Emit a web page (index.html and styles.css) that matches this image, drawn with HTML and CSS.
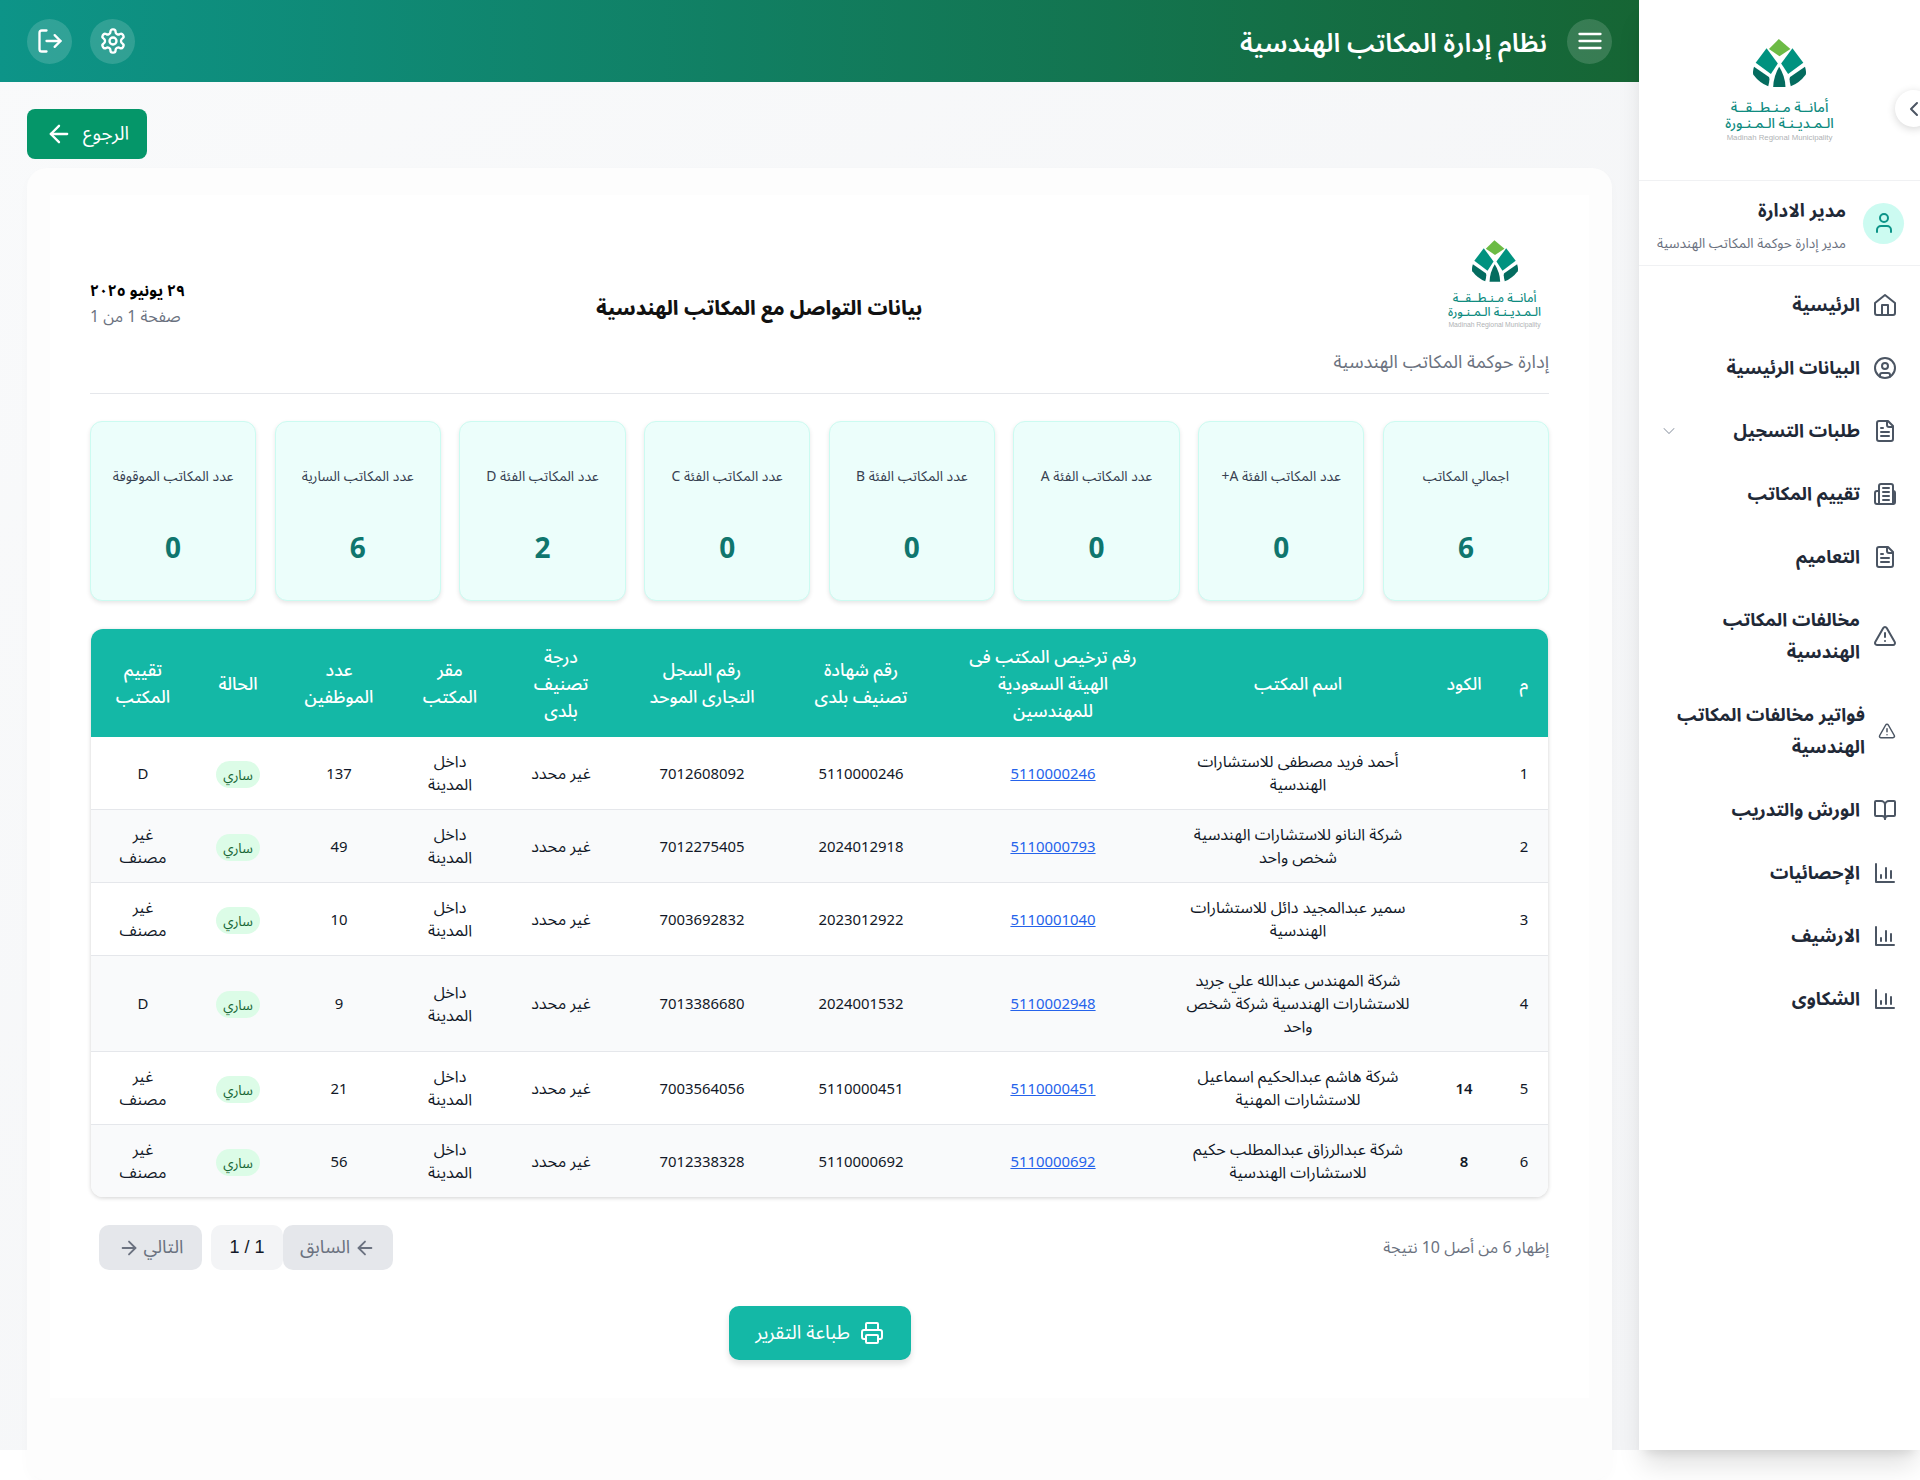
FILE: index.html
```html
<!DOCTYPE html>
<html lang="ar" dir="rtl">
<head>
<meta charset="utf-8">
<title>بيانات التواصل مع المكاتب الهندسية</title>
<link rel="stylesheet" href="styles.css">
</head>
<body>
<svg class="defs" aria-hidden="true">
  <symbol id="mark" viewBox="0 0 160 145">
    <path fill="#6cbb45" d="M78 0 113 30 80 52 48 30Z"/>
    <path fill="#00927f" d="M41 28 8 72 54 106 75 74Z"/>
    <path fill="#00927f" d="M119 28 152 72 106 106 85 74Z"/>
    <path fill="#046c5f" d="M3 84Q-2 100 1 108 20 133 46 143 52 120 48 115Z"/>
    <path fill="#046c5f" d="M157 84Q162 100 159 108 140 133 114 143 108 120 112 115Z"/>
    <path fill="#046c5f" d="M79 84Q62 112 61 145H98Q97 112 79 84Z"/>
  </symbol>
  <symbol id="i-home" viewBox="0 0 24 24"><path d="m2 10 10-8 10 8v10a2 2 0 0 1-2 2H4a2 2 0 0 1-2-2z"/><path d="M9 22V12h6v10"/></symbol>
  <symbol id="i-user-circle" viewBox="0 0 24 24"><circle cx="12" cy="12" r="10"/><circle cx="12" cy="10" r="3"/><path d="M7 20.662V19a2 2 0 0 1 2-2h6a2 2 0 0 1 2 2v1.662"/></symbol>
  <symbol id="i-file" viewBox="0 0 24 24"><path d="M15 2H6a2 2 0 0 0-2 2v16a2 2 0 0 0 2 2h12a2 2 0 0 0 2-2V7Z"/><path d="M14 2v4a2 2 0 0 0 2 2h4"/><path d="M10 9H8"/><path d="M16 13H8"/><path d="M16 17H8"/></symbol>
  <symbol id="i-paper" viewBox="0 0 24 24"><path d="M6 22V4a2 2 0 0 1 2-2h10a2 2 0 0 1 2 2v18"/><path d="M6 9H4a2 2 0 0 0-2 2v9a2 2 0 0 0 2 2h16a2 2 0 0 0 2-2v-9a2 2 0 0 0-2-2h-0"/><path d="M10 6h6"/><path d="M10 10h6"/><path d="M10 14h6"/><path d="M10 18h6"/></symbol>
  <symbol id="i-alert" viewBox="0 0 24 24"><path d="m21.73 18-8-14a2 2 0 0 0-3.48 0l-8 14A2 2 0 0 0 4 21h16a2 2 0 0 0 1.73-3"/><path d="M12 9v4"/><path d="M12 17h.01"/></symbol>
  <symbol id="i-book" viewBox="0 0 24 24"><path d="M12 7v14"/><path d="M3 18a1 1 0 0 1-1-1V4a1 1 0 0 1 1-1h5a4 4 0 0 1 4 4 4 4 0 0 1 4-4h5a1 1 0 0 1 1 1v13a1 1 0 0 1-1 1h-6a3 3 0 0 0-3 3 3 3 0 0 0-3-3z"/></symbol>
  <symbol id="i-chart" viewBox="0 0 24 24"><path d="M3 3v18h18"/><path d="M8 17v-3"/><path d="M13 17V7"/><path d="M18 17v-7"/></symbol>
  <symbol id="i-left" viewBox="0 0 24 24"><path d="M19 12H5"/><path d="m12 19-7-7 7-7"/></symbol>
  <symbol id="i-right" viewBox="0 0 24 24"><path d="M5 12h14"/><path d="m12 5 7 7-7 7"/></symbol>
</svg>

<aside class="sidebar">
  <button class="collapse" type="button" aria-label="طي">
    <svg class="collapse-ico" viewBox="0 0 24 24"><path d="m15 18-6-6 6-6"/></svg>
  </button>
  <div class="side-logo">
    <div class="logo logo-lg">
      <svg class="logo-mark"><use href="#mark"/></svg>
      <div class="logo-ar">أمانــة مـنـطــقــة</div>
      <div class="logo-ar">الـمـديـنـة الـمـنـورة</div>
      <div class="logo-en" dir="ltr">Madinah Regional Municipality</div>
    </div>
  </div>
  <div class="side-user">
    <div class="avatar">
      <svg class="avatar-ico" viewBox="0 0 24 24"><path d="M19 21v-2a4 4 0 0 0-4-4H9a4 4 0 0 0-4 4v2"/><circle cx="12" cy="7" r="4"/></svg>
    </div>
    <div class="user-text">
      <div class="user-name">مدير الادارة</div>
      <div class="user-role">مدير إدارة حوكمة المكاتب الهندسية</div>
    </div>
  </div>
  <nav class="menu">
    <a class="menu-item"><svg class="menu-ico"><use href="#i-home"/></svg><span class="menu-label">الرئيسية</span></a>
    <a class="menu-item"><svg class="menu-ico"><use href="#i-user-circle"/></svg><span class="menu-label">البيانات الرئيسية</span></a>
    <a class="menu-item"><svg class="menu-ico"><use href="#i-file"/></svg><span class="menu-label">طلبات التسجيل</span>
      <svg class="menu-caret" viewBox="0 0 24 24"><path d="m6 9 6 6 6-6"/></svg></a>
    <a class="menu-item"><svg class="menu-ico"><use href="#i-paper"/></svg><span class="menu-label">تقييم المكاتب</span></a>
    <a class="menu-item"><svg class="menu-ico"><use href="#i-file"/></svg><span class="menu-label">التعاميم</span></a>
    <a class="menu-item"><svg class="menu-ico"><use href="#i-alert"/></svg><span class="menu-label menu-label-wrap">مخالفات المكاتب الهندسية</span></a>
    <a class="menu-item"><svg class="menu-ico menu-ico-sm"><use href="#i-alert"/></svg><span class="menu-label">فواتير مخالفات المكاتب الهندسية</span></a>
    <a class="menu-item"><svg class="menu-ico"><use href="#i-book"/></svg><span class="menu-label">الورش والتدريب</span></a>
    <a class="menu-item"><svg class="menu-ico"><use href="#i-chart"/></svg><span class="menu-label">الإحصائيات</span></a>
    <a class="menu-item"><svg class="menu-ico"><use href="#i-chart"/></svg><span class="menu-label">الارشيف</span></a>
    <a class="menu-item"><svg class="menu-ico"><use href="#i-chart"/></svg><span class="menu-label">الشكاوى</span></a>
  </nav>
</aside>

<div class="main">
  <header class="topbar">
    <div class="topbar-start">
      <button class="round-btn" type="button" aria-label="القائمة">
        <svg class="round-ico" viewBox="0 0 24 24"><path d="M3 6h18"/><path d="M3 12h18"/><path d="M3 18h18"/></svg>
      </button>
      <h1 class="app-title">نظام إدارة المكاتب الهندسية</h1>
    </div>
    <div class="topbar-end">
      <button class="round-btn" type="button" aria-label="الإعدادات">
        <svg class="round-ico" viewBox="0 0 24 24"><path d="M12.22 2h-.44a2 2 0 0 0-2 2v.18a2 2 0 0 1-1 1.73l-.43.25a2 2 0 0 1-2 0l-.15-.08a2 2 0 0 0-2.73.73l-.22.38a2 2 0 0 0 .73 2.73l.15.1a2 2 0 0 1 1 1.72v.51a2 2 0 0 1-1 1.74l-.15.09a2 2 0 0 0-.73 2.73l.22.38a2 2 0 0 0 2.73.73l.15-.08a2 2 0 0 1 2 0l.43.25a2 2 0 0 1 1 1.73V20a2 2 0 0 0 2 2h.44a2 2 0 0 0 2-2v-.18a2 2 0 0 1 1-1.73l.43-.25a2 2 0 0 1 2 0l.15.08a2 2 0 0 0 2.73-.73l.22-.39a2 2 0 0 0-.73-2.73l-.15-.08a2 2 0 0 1-1-1.74v-.5a2 2 0 0 1 1-1.74l.15-.09a2 2 0 0 0 .73-2.73l-.22-.38a2 2 0 0 0-2.73-.73l-.15.08a2 2 0 0 1-2 0l-.43-.25a2 2 0 0 1-1-1.73V4a2 2 0 0 0-2-2z"/><circle cx="12" cy="12" r="3"/></svg>
      </button>
      <button class="round-btn" type="button" aria-label="خروج">
        <svg class="round-ico" viewBox="0 0 24 24"><path d="M9 21H5a2 2 0 0 1-2-2V5a2 2 0 0 1 2-2h4"/><path d="m16 17 5-5-5-5"/><path d="M21 12H9"/></svg>
      </button>
    </div>
  </header>

  <div class="content">
    <div class="back-row">
      <a class="back-btn">الرجوع <svg class="back-ico"><use href="#i-left"/></svg></a>
    </div>
    <section class="card">
      <div class="report">
        <div class="report-head">
          <div class="org">
            <div class="logo logo-sm">
              <svg class="logo-mark"><use href="#mark"/></svg>
              <div class="logo-ar">أمانــة مـنـطــقــة</div>
              <div class="logo-ar">الـمـديـنـة الـمـنـورة</div>
              <div class="logo-en" dir="ltr">Madinah Regional Municipality</div>
            </div>
            <div class="org-name">إدارة حوكمة المكاتب الهندسية</div>
          </div>
          <h2 class="report-title">بيانات التواصل مع المكاتب الهندسية</h2>
          <div class="report-meta">
            <div class="report-date">٢٩ يونيو ٢٠٢٥</div>
            <div class="report-page">صفحة 1 من 1</div>
          </div>
        </div>

        <div class="stats">
          <div class="stat"><div class="stat-label">اجمالي المكاتب</div><div class="stat-num">6</div></div>
          <div class="stat"><div class="stat-label">عدد المكاتب الفئة A+</div><div class="stat-num">0</div></div>
          <div class="stat"><div class="stat-label">عدد المكاتب الفئة A</div><div class="stat-num">0</div></div>
          <div class="stat"><div class="stat-label">عدد المكاتب الفئة B</div><div class="stat-num">0</div></div>
          <div class="stat"><div class="stat-label">عدد المكاتب الفئة C</div><div class="stat-num">0</div></div>
          <div class="stat"><div class="stat-label">عدد المكاتب الفئة D</div><div class="stat-num">2</div></div>
          <div class="stat"><div class="stat-label">عدد المكاتب السارية</div><div class="stat-num">6</div></div>
          <div class="stat"><div class="stat-label">عدد المكاتب الموقوفة</div><div class="stat-num">0</div></div>
        </div>

        <div class="table-wrap">
          <table class="table">
            <colgroup>
              <col class="c-m"><col class="c-code"><col class="c-name"><col class="c-lic"><col class="c-cert"><col class="c-rec"><col class="c-deg"><col class="c-hq"><col class="c-emp"><col class="c-st"><col class="c-rate">
            </colgroup>
            <thead>
              <tr>
                <th>م</th><th>الكود</th><th>اسم المكتب</th>
                <th>رقم ترخيص المكتب فى<br>الهيئة السعودية<br>للمهندسين</th>
                <th>رقم شهادة<br>تصنيف بلدى</th>
                <th>رقم السجل<br>التجارى الموحد</th>
                <th>درجة<br>تصنيف<br>بلدى</th>
                <th>مقر<br>المكتب</th>
                <th>عدد<br>الموظفين</th>
                <th>الحالة</th>
                <th>تقييم<br>المكتب</th>
              </tr>
            </thead>
            <tbody>
              <tr>
                <td>1</td><td class="code"></td><td class="ar name">أحمد فريد مصطفى للاستشارات الهندسية</td>
                <td><a class="lic">5110000246</a></td><td>5110000246</td><td>7012608092</td><td class="ar">غير محدد</td><td class="ar">داخل<br>المدينة</td><td>137</td>
                <td><span class="pill">ساري</span></td><td>D</td>
              </tr>
              <tr>
                <td>2</td><td class="code"></td><td class="ar name">شركة النانو للاستشارات الهندسية شخص واحد</td>
                <td><a class="lic">5110000793</a></td><td>2024012918</td><td>7012275405</td><td class="ar">غير محدد</td><td class="ar">داخل<br>المدينة</td><td>49</td>
                <td><span class="pill">ساري</span></td><td class="ar">غير<br>مصنف</td>
              </tr>
              <tr>
                <td>3</td><td class="code"></td><td class="ar name">سمير عبدالمجيد دائل للاستشارات الهندسية</td>
                <td><a class="lic">5110001040</a></td><td>2023012922</td><td>7003692832</td><td class="ar">غير محدد</td><td class="ar">داخل<br>المدينة</td><td>10</td>
                <td><span class="pill">ساري</span></td><td class="ar">غير<br>مصنف</td>
              </tr>
              <tr>
                <td>4</td><td class="code"></td><td class="ar name">شركة المهندس عبدالله علي جريد للاستشارات الهندسية شركة شخص واحد</td>
                <td><a class="lic">5110002948</a></td><td>2024001532</td><td>7013386680</td><td class="ar">غير محدد</td><td class="ar">داخل<br>المدينة</td><td>9</td>
                <td><span class="pill">ساري</span></td><td>D</td>
              </tr>
              <tr>
                <td>5</td><td class="code">14</td><td class="ar name">شركة هاشم عبدالحكيم اسماعيل للاستشارات المهنية</td>
                <td><a class="lic">5110000451</a></td><td>5110000451</td><td>7003564056</td><td class="ar">غير محدد</td><td class="ar">داخل<br>المدينة</td><td>21</td>
                <td><span class="pill">ساري</span></td><td class="ar">غير<br>مصنف</td>
              </tr>
              <tr>
                <td>6</td><td class="code">8</td><td class="ar name">شركة عبدالرزاق عبدالمطلب حكيم للاستشارات الهندسية</td>
                <td><a class="lic">5110000692</a></td><td>5110000692</td><td>7012338328</td><td class="ar">غير محدد</td><td class="ar">داخل<br>المدينة</td><td>56</td>
                <td><span class="pill">ساري</span></td><td class="ar">غير<br>مصنف</td>
              </tr>
            </tbody>
          </table>
        </div>

        <div class="pager-row">
          <div class="pager-info">إظهار 6 من أصل 10 نتيجة</div>
          <div class="pager">
            <span class="page-btn page-prev"><svg class="page-ico"><use href="#i-left"/></svg> السابق</span>
            <span class="page-cur">1 / 1</span>
            <span class="page-btn page-next">التالي <svg class="page-ico"><use href="#i-right"/></svg></span>
          </div>
        </div>

        <div class="print-row">
          <a class="print-btn">
            <svg class="print-ico" viewBox="0 0 24 24"><path d="M6 18H4a2 2 0 0 1-2-2v-5a2 2 0 0 1 2-2h16a2 2 0 0 1 2 2v5a2 2 0 0 1-2 2h-2"/><path d="M6 9V3a1 1 0 0 1 1-1h10a1 1 0 0 1 1 1v6"/><rect x="6" y="14" width="12" height="8" rx="1"/></svg>
            طباعة التقرير
          </a>
        </div>
      </div>
    </section>
  </div>
</div>
</body>
</html>
```
FILE: styles.css
```css
* { box-sizing: border-box; }
html, body { margin: 0; padding: 0; }
body {
  display: flex;
  width: 1920px;
  height: 1480px;
  overflow: hidden;
  background: #fff;
  color: #111827;
  font-family: "Noto Sans Arabic", "Noto Sans", "DejaVu Sans", sans-serif;
  font-size: 15px;
}
.defs { position: absolute; width: 0; height: 0; }
svg use, .menu-ico, .round-ico, .back-ico, .page-ico, .print-ico, .avatar-ico, .collapse-ico, .menu-caret {
  fill: none;
  stroke: currentColor;
  stroke-width: 2;
  stroke-linecap: round;
  stroke-linejoin: round;
}
.logo-mark use { fill: initial; stroke: none; }

/* sidebar */
.sidebar {
  position: relative;
  flex: 0 0 281px;
  height: 1450px;
  background: #fff;
  box-shadow: 0 20px 25px -5px rgba(0,0,0,.12), 0 8px 10px -6px rgba(0,0,0,.1);
  z-index: 2;
}
.collapse {
  position: absolute;
  top: 90px;
  left: 256px;
  width: 37px;
  height: 37px;
  padding: 0;
  border: 0;
  border-radius: 50%;
  background: #fff;
  color: #4b5563;
  box-shadow: 0 2px 8px rgba(0,0,0,.16);
  display: flex;
  align-items: center;
  justify-content: center;
}
.collapse-ico { width: 24px; height: 24px; flex: none; }
.side-logo {
  height: 181px;
  display: flex;
  align-items: center;
  justify-content: center;
  border-bottom: 1px solid #f0f1f3;
}
.logo { display: flex; flex-direction: column; align-items: center; white-space: nowrap; }
.logo-ar { color: #0f8b7f; line-height: 1.1; font-weight: 500; }
.logo-en { color: #b0b3b5; font-family: "Liberation Sans", sans-serif; }
.logo-lg { width: 110px; }
.logo-lg .logo-mark { width: 53px; height: 48px; margin-bottom: 13px; }
.logo-lg .logo-ar { font-size: 14px; height: 16px; }
.logo-lg .logo-en { font-size: 7.8px; margin-top: 1px; }
.logo-sm { width: 95px; margin-inline-start: 7px; }
.logo-sm .logo-mark { width: 46px; height: 42px; margin-bottom: 10px; }
.logo-sm .logo-ar { font-size: 12px; height: 14px; }
.logo-sm .logo-en { font-size: 6.8px; margin-top: 1px; }

.side-user {
  height: 85px;
  padding: 0 16px;
  display: flex;
  align-items: center;
  gap: 17px;
  border-bottom: 1px solid #f0f1f3;
}
.avatar {
  width: 41px;
  height: 41px;
  flex: none;
  border-radius: 50%;
  background: #ccfbf1;
  color: #0d9488;
  display: flex;
  align-items: center;
  justify-content: center;
}
.avatar-ico { width: 24px; height: 24px; }
.user-text { padding-top: 12px; }
.user-name { font-size: 18.5px; font-weight: 700; line-height: 30px; color: #1f2937; }
.user-role { font-size: 13.7px; line-height: 34px; color: #6b7280; white-space: nowrap; }

.menu { padding: 7px 23px 0 20px; }
.menu-item {
  display: flex;
  align-items: center;
  gap: 13px;
  padding: 15.5px 0;
  color: #1f2937;
}
.menu-ico { width: 24px; height: 24px; flex: none; color: #4b5563; stroke-width: 1.5; }
.menu-ico-sm { width: 18px; height: 18px; margin-inline-start: 1px; margin-inline-end: 0; }
.menu-label { font-size: 18.3px; font-weight: 700; line-height: 32px; }
.menu-label-wrap { max-width: 165px; }
.menu-caret {
  width: 20px;
  height: 20px;
  margin-inline-start: auto;
  color: #9ca3af;
  stroke-width: 1.25;
}

/* main */
.main {
  position: relative;
  flex: 1;
  min-width: 0;
  height: 1450px;
  background: linear-gradient(135deg, #f9fafb, #f3f4f6);
}
.topbar {
  height: 82px;
  padding: 0 27px;
  display: flex;
  align-items: center;
  justify-content: space-between;
  color: #fff;
  background: linear-gradient(to left, #166534, #0d9488);
}
.topbar-start, .topbar-end { display: flex; align-items: center; }
.topbar-start { gap: 20px; }
.topbar-end { gap: 18px; }
.round-btn {
  width: 45px;
  height: 45px;
  padding: 0;
  border: 0;
  border-radius: 50%;
  background: rgba(255,255,255,.15);
  color: #fff;
  display: flex;
  align-items: center;
  justify-content: center;
}
.round-ico { width: 28px; height: 28px; }
.app-title { margin: 6px 0 0; font-size: 26.2px; font-weight: 600; line-height: 40px; }

.content { padding: 27px 27px 0; }
.back-row { display: flex; justify-content: flex-end; }
.back-btn {
  width: 120px;
  height: 50px;
  display: flex;
  align-items: center;
  justify-content: center;
  gap: 10px;
  border-radius: 8px;
  background: #059669;
  color: #fff;
  font-size: 19px;
}
.back-ico { width: 28px; height: 28px; }
.card {
  margin-top: 9px;
  height: 1312px;
  padding: 27px 23px 0;
  border-radius: 20px;
  background: #fdfdfd;
  box-shadow: 0 4px 12px rgba(0,0,0,.02);
}
.report { padding: 45px 40px 0; height: 1203px; background: #fff; }

.report-head {
  display: flex;
  justify-content: space-between;
  align-items: center;
  padding-bottom: 17px;
  border-bottom: 1px solid #e5e7eb;
  height: 154px;
}
.org { display: flex; flex-direction: column; align-items: flex-start; align-self: flex-start; }
.org-name { margin-top: 20px; font-size: 18.3px; line-height: 28px; color: #6b7280; white-space: nowrap; }
.org .logo { align-self: flex-start; }
.report-title { margin: 2px 0 0; font-size: 19.8px; font-weight: 800; line-height: 36px; color: #111; }
.report-meta { text-align: left; margin-bottom: 8px; }
.report-date { font-size: 15.6px; font-weight: 700; line-height: 26px; color: #000; }
.report-page { font-size: 15.9px; line-height: 24px; color: #6b7280; }

.stats {
  margin-top: 27px;
  display: grid;
  grid-template-columns: repeat(8, 1fr);
  gap: 18.5px;
}
.stat {
  height: 180px;
  padding: 43px 8px 0;
  text-align: center;
  border: 1px solid #ccfbf1;
  border-radius: 12px;
  background: #ecfefb;
  box-shadow: 0 2px 4px rgba(0,0,0,.1);
}
.stat-label { font-size: 13.9px; line-height: 24px; color: #374151; white-space: nowrap; }
.stat-num { margin-top: 41px; font-size: 28px; font-weight: 700; line-height: 40px; color: #0f766e; }

.table-wrap {
  margin: 28px 1px 0;
  border-radius: 12px;
  overflow: hidden;
  box-shadow: 0 1px 4px rgba(0,0,0,.18);
  background: #fff;
}
.table { width: 100%; border-collapse: collapse; table-layout: fixed; }
.c-m { width: 48px; }
.c-code { width: 72px; }
.c-name { width: 260px; }
.c-lic { width: 230px; }
.c-cert { width: 154px; }
.c-rec { width: 164px; }
.c-deg { width: 118px; }
.c-hq { width: 104px; }
.c-emp { width: 118px; }
.c-st { width: 84px; }
.c-rate { width: 106px; }
.table th {
  padding: 14.5px 8px 12.5px;
  background: #14b8a6;
  color: #fff;
  font-size: 17.5px;
  font-weight: 500;
  line-height: 27px;
  text-align: center;
}
.table td {
  padding: 14px 8px 12px;
  font-size: 14.9px;
  line-height: 23px;
  text-align: center;
  color: #111827;
  border-bottom: 1px solid #e5e7eb;
}
.table td.ar { font-size: 16.1px; }
.table tbody tr:nth-child(even) td { background: #f9fafb; }
.table tbody tr:last-child td { border-bottom: 0; }
.table td.name { padding: 14px 16px 12px; }
.table td.code { font-weight: 600; }
.lic { color: #2563eb; text-decoration: underline; }
.pill {
  display: inline-block;
  width: 44px;
  height: 27px;
  border-radius: 14px;
  background: #dcfce7;
  color: #166534;
  font-size: 13.5px;
  line-height: 30px;
}

.pager-row {
  margin-top: 28px;
  padding-left: 9px;
  display: flex;
  align-items: center;
  justify-content: space-between;
}
.pager-info { font-size: 16px; color: #6b7280; }
.pager { display: flex; align-items: center; }
.page-btn {
  height: 45px;
  display: flex;
  align-items: center;
  justify-content: center;
  gap: 4px;
  border-radius: 10px;
  background: #e5e7eb;
  color: #6b7280;
  font-size: 18.5px;
}
.page-prev { width: 110px; }
.page-next { width: 103px; margin-inline-start: 9px; }
.page-cur {
  width: 72px;
  height: 45px;
  display: flex;
  align-items: center;
  justify-content: center;
  border-radius: 10px;
  background: #f3f4f6;
  color: #111827;
  font-family: "Liberation Sans", sans-serif;
  font-size: 18px;
}
.page-ico { width: 22px; height: 22px; }
.print-row { margin-top: 36px; display: flex; justify-content: center; }
.print-btn {
  width: 182px;
  height: 54px;
  display: flex;
  align-items: center;
  justify-content: center;
  gap: 10px;
  border-radius: 10px;
  background: #14b8a6;
  color: #fff;
  font-size: 19px;
  box-shadow: 0 4px 6px rgba(0,0,0,.12);
}
.print-ico { width: 24px; height: 24px; }
```
